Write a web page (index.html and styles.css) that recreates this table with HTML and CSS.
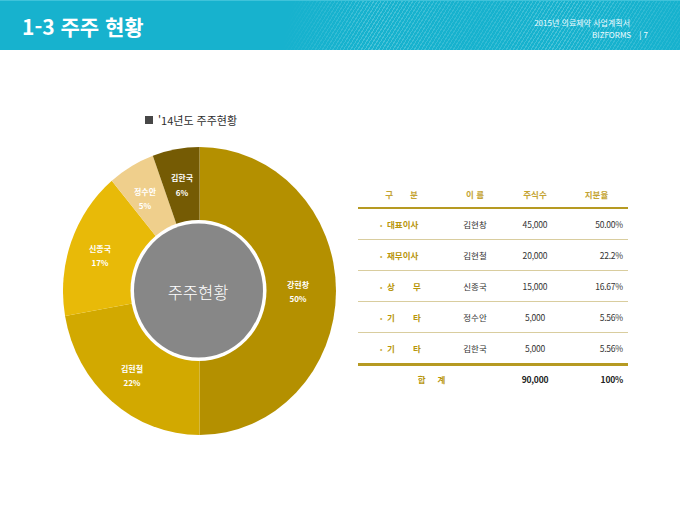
FILE: index.html
```html
<!DOCTYPE html>
<html lang="ko">
<head>
<meta charset="utf-8">
<title>1-3 주주 현황</title>
<link rel="stylesheet" href="styles.css">
</head>
<body>
<header class="header">
  <h1 class="title">1-3 주주 현황</h1>
  <div class="meta">
    <div class="meta-doc">2015년 의료제약 사업계획서</div>
    <div class="meta-brand"><span>BIZFORMS</span><span class="page">| 7</span></div>
  </div>
</header>
<main class="main">
  <section class="chart">
    <div class="chart-title"><span class="sq"></span>'14년도 주주현황</div>
    <svg class="donut" width="274" height="290" viewBox="0 0 274 290">
      <path class="s1" d="M136.5,145 L136.5,1 A136.5,144 0 0 1 273,145 A136.5,144 0 0 1 136.5,289 Z"/>
      <path class="s2" d="M136.5,145 L136.5,289 A136.5,144 0 0 1 2.07,170 Z"/>
      <path class="s3" d="M136.5,145 L2.07,170 A136.5,144 0 0 1 48.76,34.69 Z"/>
      <path class="s4" d="M136.5,145 L48.76,34.69 A136.5,144 0 0 1 89.81,9.68 Z"/>
      <path class="s5" d="M136.5,145 L89.81,9.68 A136.5,144 0 0 1 136.5,1 Z"/>
      <ellipse cx="135.5" cy="144.5" rx="68" ry="70.5" fill="#ffffff"/>
      <ellipse cx="135.5" cy="144.5" rx="64.5" ry="67" fill="#878787"/>
      <text class="center" x="135" y="153">주주현황</text>
      <text class="lbl" x="235" y="142">강현창</text>
      <text class="lbl" x="235" y="156">50%</text>
      <text class="lbl" x="69" y="226">김현철</text>
      <text class="lbl" x="69" y="240">22%</text>
      <text class="lbl" x="37" y="106">신종국</text>
      <text class="lbl" x="37" y="120">17%</text>
      <text class="lbl" x="82" y="49">정수안</text>
      <text class="lbl" x="82" y="63">5%</text>
      <text class="lbl" x="119" y="35">김한국</text>
      <text class="lbl" x="119" y="50">6%</text>
    </svg>
  </section>
  <section class="tablewrap">
    <div class="row head">
      <div class="c1 hc"><span class="gap">구</span>분</div>
      <div class="c2">이 름</div>
      <div class="c3">주식수</div>
      <div class="c4h">지분율</div>
    </div>
    <div class="row">
      <div class="c1"><span class="dot">•</span>대표이사</div>
      <div class="c2 nm">김현창</div>
      <div class="c3 num">45,000</div>
      <div class="c4 num">50.00%</div>
    </div>
    <div class="row">
      <div class="c1"><span class="dot">•</span>재무이사</div>
      <div class="c2 nm">김현철</div>
      <div class="c3 num">20,000</div>
      <div class="c4 num">22.2%</div>
    </div>
    <div class="row">
      <div class="c1"><span class="dot">•</span><span class="w">상</span>무</div>
      <div class="c2 nm">신종국</div>
      <div class="c3 num">15,000</div>
      <div class="c4 num">16.67%</div>
    </div>
    <div class="row">
      <div class="c1"><span class="dot">•</span><span class="w">기</span>타</div>
      <div class="c2 nm">정수안</div>
      <div class="c3 num">5,000</div>
      <div class="c4 num">5.56%</div>
    </div>
    <div class="row last">
      <div class="c1"><span class="dot">•</span><span class="w">기</span>타</div>
      <div class="c2 nm">김한국</div>
      <div class="c3 num">5,000</div>
      <div class="c4 num">5.56%</div>
    </div>
    <div class="row total">
      <div class="tl"><span class="gap2">합</span>계</div>
      <div class="c3 num b">90,000</div>
      <div class="c4 num b">100%</div>
    </div>
  </section>
</main>
</body>
</html>
```
FILE: styles.css
```css
html, body {
  margin: 0;
  padding: 0;
  background: #ffffff;
  font-family: "Noto Sans CJK KR", "Noto Sans", sans-serif;
}

.header {
  position: relative;
  height: 50px;
  background: #17b2ce;
  display: flex;
  align-items: center;
  justify-content: space-between;
  padding: 0 32px 0 22px;
  overflow: hidden;
  border-top: 1px solid #3fc3da;
  box-sizing: border-box;
}

.header::before {
  content: "";
  position: absolute;
  inset: 0;
  background: repeating-linear-gradient(-58deg, rgba(255,255,255,0.22) 0 1px, transparent 1px 3px);
  -webkit-mask-image: linear-gradient(100deg, transparent 42%, #000 55%, rgba(0,0,0,0.5) 70%, #000 82%, rgba(0,0,0,0.3) 100%);
  mask-image: linear-gradient(100deg, transparent 42%, #000 55%, rgba(0,0,0,0.5) 70%, #000 82%, rgba(0,0,0,0.3) 100%);
}

.title {
  position: relative;
  margin: 0;
  color: #ffffff;
  font-size: 21px;
  font-weight: 700;
  line-height: 1;
  margin-top: 2px;
}

.meta {
  position: relative;
  display: flex;
  flex-direction: column;
  align-items: flex-end;
  color: #eefbff;
  font-size: 8px;
  line-height: 12px;
  margin-top: 6px;
}

.meta-doc {
  margin-right: 18px;
}

.meta-brand {
  display: flex;
  gap: 8px;
}

.main {
  display: flex;
  padding-left: 63px;
}

.chart {
  width: 274px;
  padding-top: 62px;
}

.chart-title {
  padding-left: 82px;
  font-size: 11px;
  line-height: 16px;
  color: #2e2e2e;
  display: flex;
  align-items: center;
}

.sq {
  display: inline-block;
  width: 8px;
  height: 8px;
  background: #474747;
  margin-right: 5px;
}

.donut {
  display: block;
  margin-top: 18px;
}

.s1 { fill: #b49000; }
.s2 { fill: #d2a900; }
.s3 { fill: #e8ba08; }
.s4 { fill: #efcf8c; }
.s5 { fill: #755b04; }

.center {
  fill: #ffffff;
  font-size: 16.5px;
  font-weight: 300;
  text-anchor: middle;
}

.lbl {
  fill: #ffffff;
  font-size: 8px;
  font-weight: 700;
  text-anchor: middle;
}

.tablewrap {
  margin-left: 21px;
  padding-top: 133px;
  width: 270px;
}

.row {
  display: grid;
  grid-template-columns: 87px 60px 60px 63px;
  align-items: center;
  height: 31px;
  box-sizing: border-box;
  border-bottom: 1px solid #d9cd9e;
  font-size: 8.5px;
  color: #333333;
}

.row.head {
  height: 26px;
  padding-bottom: 3px;
  border-bottom: 2px solid #b69a22;
  color: #c4a434;
  font-weight: 700;
}

.row.last {
  height: 33px;
  border-bottom: 3px solid #b69a22;
}

.row.total {
  height: 26px;
  border-bottom: none;
}

.c1 {
  padding-left: 22px;
  color: #b8960c;
  font-weight: 700;
  white-space: nowrap;
}

.row.head .c1 { color: #c4a434; }

.c1.hc {
  padding-left: 0;
  text-align: center;
}

.gap { margin-right: 17px; }

.dot {
  display: inline-block;
  width: 7px;
  font-size: 7px;
  font-weight: 400;
  color: #c9ab45;
}

.w {
  display: inline-block;
  width: 26px;
}

.c2, .c3 { text-align: center; }

.c4h { text-align: center; }

.c4 {
  text-align: right;
  padding-right: 5px;
}

.tl {
  grid-column: span 2;
  text-align: center;
  color: #b8960c;
  font-weight: 700;
}

.gap2 { margin-right: 12px; }

.num { letter-spacing: -0.2px; }

.b {
  font-weight: 700;
  color: #222222;
}
```
